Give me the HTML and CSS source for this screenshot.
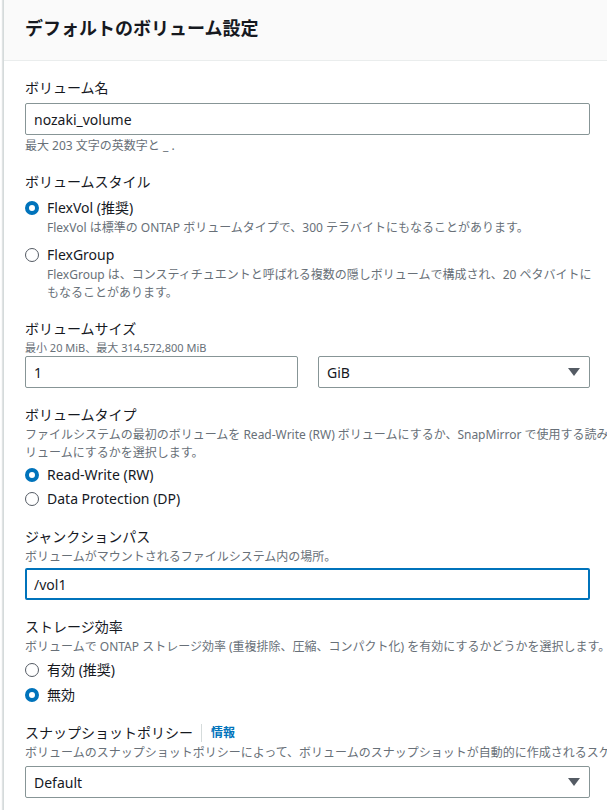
FILE: index.html
```html
<!DOCTYPE html>
<html lang="ja">
<head>
<meta charset="utf-8">
<title>デフォルトのボリューム設定</title>
<link rel="stylesheet" href="styles.css">
</head>
<body>
<div class="panel">
  <div class="panel-header">
    <h2 class="panel-title">デフォルトのボリューム設定</h2>
  </div>
  <div class="panel-body">

    <div class="field">
      <div class="field-label">ボリューム名</div>
      <div class="control"><input class="input" type="text" value="nozaki_volume" readonly></div>
      <div class="constraint">最大 203 文字の英数字と _ .</div>
    </div>

    <div class="field">
      <div class="field-label">ボリュームスタイル</div>
      <div class="radio-group radio-group-desc">
        <div class="radio">
          <span class="radio-dot checked"></span>
          <div class="radio-text">
            <div class="radio-label">FlexVol (推奨)</div>
            <div class="radio-desc">FlexVol は標準の ONTAP ボリュームタイプで、300 テラバイトにもなることがあります。</div>
          </div>
        </div>
        <div class="radio">
          <span class="radio-dot"></span>
          <div class="radio-text">
            <div class="radio-label">FlexGroup</div>
            <div class="radio-desc">FlexGroup は、コンスティチュエントと呼ばれる複数の隠しボリュームで構成され、20 ペタバイトにもなることがあります。</div>
          </div>
        </div>
      </div>
    </div>

    <div class="field">
      <div class="field-label">ボリュームサイズ</div>
      <div class="constraint-sm">最小 20 MiB、最大 314,572,800 MiB</div>
      <div class="control control-flush split">
        <input class="input" type="text" value="1" readonly>
        <div class="select">
          <span>GiB</span>
          <svg class="caret" width="12" height="8" viewBox="0 0 12 8"><path d="M0 0H12L6 8Z" fill="#545b64"/></svg>
        </div>
      </div>
    </div>

    <div class="field">
      <div class="field-label">ボリュームタイプ</div>
      <div class="desc">ファイルシステムの最初のボリュームを Read-Write (RW) ボリュームにするか、SnapMirror で使用する読み取り専用 (DP) ボ<br>リュームにするかを選択します。</div>
      <div class="radio-group radio-group-tight">
        <div class="radio">
          <span class="radio-dot checked"></span>
          <div class="radio-label">Read-Write (RW)</div>
        </div>
        <div class="radio">
          <span class="radio-dot"></span>
          <div class="radio-label">Data Protection (DP)</div>
        </div>
      </div>
    </div>

    <div class="field">
      <div class="field-label">ジャンクションパス</div>
      <div class="desc">ボリュームがマウントされるファイルシステム内の場所。</div>
      <div class="control control-tight"><input class="input input-focus" type="text" value="/vol1" readonly></div>
    </div>

    <div class="field">
      <div class="field-label">ストレージ効率</div>
      <div class="desc">ボリュームで ONTAP ストレージ効率 (重複排除、圧縮、コンパクト化) を有効にするかどうかを選択します。</div>
      <div class="radio-group">
        <div class="radio">
          <span class="radio-dot"></span>
          <div class="radio-label">有効 (推奨)</div>
        </div>
        <div class="radio">
          <span class="radio-dot checked"></span>
          <div class="radio-label">無効</div>
        </div>
      </div>
    </div>

    <div class="field">
      <div class="field-label">スナップショットポリシー<span class="info-sep"></span><a class="info-link">情報</a></div>
      <div class="desc">ボリュームのスナップショットポリシーによって、ボリュームのスナップショットが自動的に作成されるスケジュールが決まります。</div>
      <div class="control">
        <div class="select">
          <span>Default</span>
          <svg class="caret" width="12" height="8" viewBox="0 0 12 8"><path d="M0 0H12L6 8Z" fill="#545b64"/></svg>
        </div>
      </div>
    </div>

  </div>
</div>
</body>
</html>
```

FILE: styles.css
```css
html, body {
  margin: 0;
  padding: 0;
  overflow: hidden;
  background: #ffffff;
}

body {
  font-family: "Noto Sans", "Noto Sans CJK JP", sans-serif;
  font-size: 14px;
  color: #16191f;
}

.panel {
  margin-left: 3px;
  width: 820px;
  border-left: 1px solid #d5dbdb;
  box-shadow: -1px 0 1px rgba(0, 28, 36, 0.12);
  background: #ffffff;
}

.panel-header {
  height: 61px;
  box-sizing: border-box;
  padding: 17px 21px 0;
  background: #fafafa;
  border-bottom: 1px solid #eaeded;
}

.panel-title {
  margin: 0;
  font-size: 18px;
  line-height: 22px;
  font-weight: 700;
  color: #16191f;
}

.panel-body {
  padding: 16px 21px 40px;
}

.field + .field {
  margin-top: 16px;
}

.field-label {
  line-height: 22px;
  display: flex;
  align-items: center;
}

.desc {
  font-size: 12px;
  line-height: 18px;
  color: #687078;
}

.constraint {
  margin-top: 2px;
  font-size: 12px;
  line-height: 18px;
  color: #687078;
}

.constraint-sm {
  font-size: 11px;
  line-height: 16px;
  color: #687078;
}

.control {
  margin-top: 4px;
  width: 565px;
}

.control-tight {
  margin-top: 2px;
}

.control-flush {
  margin-top: 0;
}

.split {
  display: grid;
  grid-template-columns: 273px 272px;
  column-gap: 20px;
}

.input {
  display: block;
  width: 100%;
  box-sizing: border-box;
  height: 32px;
  margin: 0;
  padding: 0 8px;
  border: 1px solid #879596;
  border-radius: 2px;
  background: #ffffff;
  font: inherit;
  font-size: 14px;
  color: #16191f;
  outline: none;
}

.input-focus {
  border: 2px solid #0073bb;
  padding: 0 7px;
}

.select {
  box-sizing: border-box;
  height: 32px;
  padding: 0 9px 0 8px;
  border: 1px solid #879596;
  border-radius: 2px;
  display: flex;
  align-items: center;
  justify-content: space-between;
}

.caret {
  display: block;
}

.radio-group {
  margin-top: 3px;
  width: 572px;
  display: flex;
  flex-direction: column;
  gap: 3px;
}

.radio-group-desc {
  margin-top: 4px;
  gap: 7px;
}

.radio-group-tight {
  margin-top: 2px;
  gap: 2px;
}

.radio {
  display: flex;
  align-items: flex-start;
  gap: 8px;
}

.radio-dot {
  flex: none;
  box-sizing: border-box;
  width: 14px;
  height: 14px;
  margin-top: 4px;
  border-radius: 50%;
  border: 1.5px solid #545b64;
  background: #ffffff;
}

.radio-dot.checked {
  border: 4.5px solid #0073bb;
}

.radio-text {
  flex: 1;
}

.radio-label {
  line-height: 22px;
}

.radio-desc {
  font-size: 12px;
  line-height: 18px;
  color: #687078;
}

.info-sep {
  display: inline-block;
  width: 0;
  height: 18px;
  border-left: 1px solid #d5dbdb;
  margin: 0 9px 0 8px;
}

.info-link {
  color: #0073bb;
  font-size: 12px;
  font-weight: 700;
  text-decoration: none;
}
```
